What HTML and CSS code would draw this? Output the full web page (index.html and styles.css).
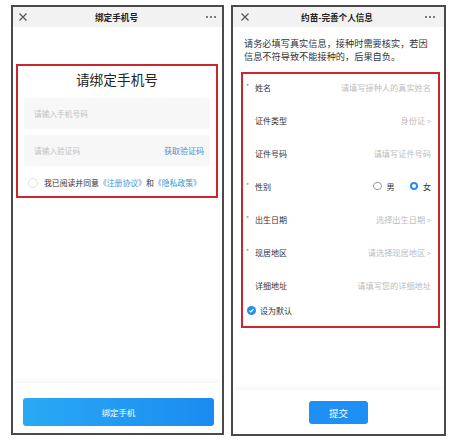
FILE: index.html
```html
<!DOCTYPE html>
<html lang="zh">
<head>
<meta charset="utf-8">
<link rel="stylesheet" href="styles.css">
</head>
<body>
<div class="page">
  <div class="phone phone-left">
    <div class="bar">
      <svg class="close" width="8" height="8" viewBox="0 0 8 8"><path d="M0.5 0.5L7.5 7.5M7.5 0.5L0.5 7.5" stroke="#555" stroke-width="1.2"/></svg>
      <div class="bar-title">绑定手机号</div>
      <div class="dots"><i></i><i></i><i></i></div>
    </div>
    <div class="content">
      <div class="redbox bind">
        <div class="bind-title">请绑定手机号</div>
        <div class="input"><span class="ph">请输入手机号码</span></div>
        <div class="input"><span class="ph">请输入验证码</span><span class="link code">获取验证码</span></div>
        <div class="agree">
          <span class="check"></span>
          <span class="agree-text">我已阅读并同意<span class="link">《注册协议》</span>和<span class="link">《隐私政策》</span></span>
        </div>
      </div>
    </div>
    <div class="footer footer-left">
      <div class="btn-wide">绑定手机</div>
    </div>
  </div>

  <div class="phone phone-right">
    <div class="bar bar-r">
      <svg class="close" width="8" height="8" viewBox="0 0 8 8"><path d="M0.5 0.5L7.5 7.5M7.5 0.5L0.5 7.5" stroke="#555" stroke-width="1.2"/></svg>
      <div class="bar-title">约苗-完善个人信息</div>
      <div class="dots"><i></i><i></i><i></i></div>
    </div>
    <div class="content content-r">
      <p class="intro">请务必填写真实信息，接种时需要核实，若因<br>信息不符导致不能接种的，后果自负。</p>
      <div class="redbox form">
        <div class="row"><span class="star">*</span><span class="label">姓名</span><span class="val">请填写接种人的真实姓名</span></div>
        <div class="row"><span class="star"></span><span class="label">证件类型</span><span class="val">身份证<span class="chev">&gt;</span></span></div>
        <div class="row"><span class="star"></span><span class="label">证件号码</span><span class="val">请填写证件号码</span></div>
        <div class="row"><span class="star">*</span><span class="label">性别</span>
          <span class="radios">
            <span class="radio"></span><span class="rtext">男</span>
            <span class="radio on"></span><span class="rtext">女</span>
          </span>
        </div>
        <div class="row"><span class="star">*</span><span class="label">出生日期</span><span class="val">选择出生日期<span class="chev">&gt;</span></span></div>
        <div class="row"><span class="star">*</span><span class="label">现居地区</span><span class="val">请选择现居地区<span class="chev">&gt;</span></span></div>
        <div class="row"><span class="star"></span><span class="label">详细地址</span><span class="val">请填写您的详细地址</span></div>
        <div class="default">
          <svg class="tick" width="9" height="9" viewBox="0 0 9 9"><circle cx="4.5" cy="4.5" r="4.5" fill="#2a8de8"/><path d="M2.4 4.6L3.9 6L6.6 3.2" stroke="#fff" stroke-width="1.1" fill="none"/></svg>
          <span class="default-text">设为默认</span>
        </div>
      </div>
    </div>
    <div class="footer footer-right">
      <div class="btn-small">提交</div>
    </div>
  </div>
</div>
</body>
</html>
```

FILE: styles.css
```css
* { box-sizing: border-box; }
html, body {
  margin: 0;
  padding: 0;
  background: #fff;
}
body {
  font-family: "Noto Sans CJK SC", "Noto Sans", sans-serif;
  color: #333;
}
.page {
  display: flex;
  gap: 7px;
  padding: 5px 0 0 11px;
}
.phone {
  display: flex;
  flex-direction: column;
  border: 2px solid #4a4a4a;
  background: #fff;
  height: 430px;
}
.phone-left { width: 213px; }
.phone-right { width: 215px; height: 431px; }

.bar {
  height: 20px;
  background: #f2f2f2;
  display: flex;
  align-items: center;
  justify-content: space-between;
  padding: 0 6px;
}
.bar-r { padding: 0 9px 0 8px; }
.close { display: block; }
.bar-title {
  font-size: 8.6px;
  font-weight: 700;
  color: #222;
  line-height: 10px;
}
.dots { display: flex; gap: 2px; width: 10px; }
.dots i {
  display: block;
  width: 2px;
  height: 2px;
  border-radius: 1px;
  background: #555;
}

.content { flex: 1; }

.redbox {
  border: 2px solid #c6282e;
}

/* left page */
.bind {
  margin: 37px 4px 0 3px;
  padding: 5px 6px 8px;
}
.bind-title {
  text-align: center;
  font-size: 13.7px;
  line-height: 17px;
  color: #222;
  margin-bottom: 10px;
}
.input {
  height: 31px;
  background: #f7f7f7;
  display: flex;
  align-items: center;
  justify-content: space-between;
  padding: 0 6px 0 10px;
  margin-bottom: 6px;
}
.ph {
  font-size: 7.7px;
  color: #c2c2c2;
}
.link { color: #3d95d6; }
.code { font-size: 8px; }
.agree {
  display: flex;
  align-items: center;
  padding: 5px 0 0 4px;
}
.check {
  width: 10px;
  height: 10px;
  border: 1px solid #e2e2e2;
  border-radius: 50%;
  margin-right: 6px;
}
.agree-text {
  font-size: 7.85px;
  color: #333;
  white-space: nowrap;
}

.footer {
  background: #fff;
  box-shadow: 0 -3px 4px rgba(0, 0, 0, 0.03);
  display: flex;
  justify-content: center;
}
.footer-left {
  padding: 15px 6px 7px 8px;
}
.btn-wide {
  width: 191px;
  height: 28px;
  border-radius: 3px;
  background: linear-gradient(90deg, #2aa9f4, #1a8bf0);
  color: #fff;
  font-size: 8.4px;
  display: flex;
  align-items: center;
  justify-content: center;
}
.footer-right {
  padding: 11px 0 10px;
}
.btn-small {
  width: 59px;
  height: 23px;
  border-radius: 3px;
  background: #1e8ff4;
  color: #fff;
  font-size: 9.5px;
  display: flex;
  align-items: center;
  justify-content: center;
}

/* right page */
.content-r { padding: 10px 0 0 0; }
.intro {
  margin: 0 0 8.5px 11px;
  font-size: 9.2px;
  line-height: 13px;
  color: #333;
  white-space: nowrap;
}
.form {
  margin: 0 4px 0 8px;
  padding: 0 7px 10px 3px;
}
.row {
  height: 33px;
  display: flex;
  align-items: flex-start;
  padding-top: 8px;
  line-height: 11px;
}
.star {
  width: 9px;
  color: #e35b5b;
  font-size: 7px;
  line-height: 9px;
}
.label {
  font-size: 8px;
  color: #333;
  flex: 1;
}
.val {
  font-size: 8.2px;
  color: #bdbdbd;
  white-space: nowrap;
}
.chev {
  margin-left: 2px;
  font-size: 7px;
}
.radios {
  display: flex;
  align-items: center;
  height: 11px;
}
.radio {
  width: 8.5px;
  height: 8.5px;
  border-radius: 50%;
  border: 1px solid #9a9a9a;
  margin-right: 5px;
}
.radio.on {
  border: 2.5px solid #2a8de8;
  margin-left: 15px;
}
.rtext {
  font-size: 8px;
  color: #333;
}
.default {
  display: flex;
  align-items: center;
  gap: 4px;
  padding-left: 1px;
}
.tick { display: block; }
.default-text {
  font-size: 8px;
  color: #333;
  line-height: 11px;
}
```
